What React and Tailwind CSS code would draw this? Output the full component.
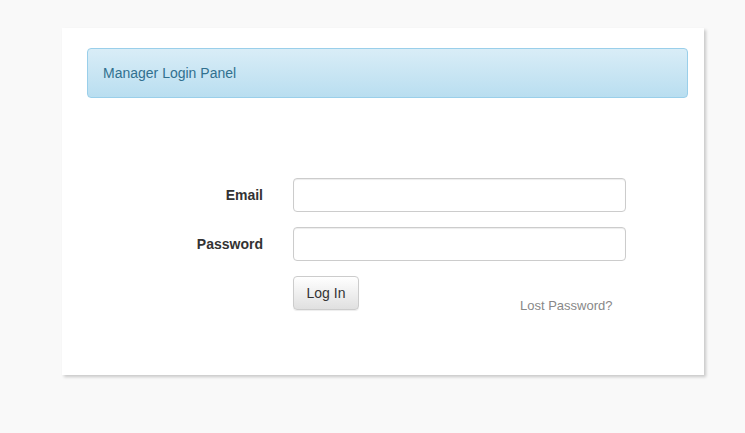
export default function App() {
  return (
    <div className="min-h-[433px] bg-[#f9f9f9] pt-[28px] font-['Liberation_Sans',Arial,sans-serif] text-[14px] text-[#333]">
      <div className="ml-[62px] w-[642px] bg-white pb-[65px] pl-[25px] pr-[16px] pt-[20px] shadow-[2px_2px_3px_rgba(0,0,0,0.2)]">
        <div className="flex h-[50px] items-center rounded-[4px] border border-[#9acfea] bg-gradient-to-b from-[#d9edf7] to-[#b9def0] pl-[15px] pt-[1px] text-[#31708f]">
          Manager Login Panel
        </div>

        <form className="mt-[80px] flex flex-col gap-[15px]">
          <div className="flex items-center">
            <label className="w-[176px] text-right font-bold">Email</label>
            <input
              type="email"
              className="ml-[30px] h-[34px] w-[333px] rounded-[4px] border border-[#ccc] px-3 shadow-[inset_0_1px_1px_rgba(0,0,0,0.075)] outline-none"
            />
          </div>
          <div className="flex items-center">
            <label className="w-[176px] text-right font-bold">Password</label>
            <input
              type="password"
              className="ml-[30px] h-[34px] w-[333px] rounded-[4px] border border-[#ccc] px-3 shadow-[inset_0_1px_1px_rgba(0,0,0,0.075)] outline-none"
            />
          </div>
          <div className="flex items-end">
            <div className="w-[206px]" />
            <button
              type="button"
              className="h-[34px] w-[66px] rounded-[4px] border border-[#ccc] bg-gradient-to-b from-white to-[#e0e0e0] text-[14px] text-[#333] shadow-[0_1px_1px_rgba(0,0,0,0.075)]"
            >
              Log In
            </button>
            <a className="mb-[-5px] ml-[161px] text-[13px] text-[#888]">Lost Password?</a>
          </div>
        </form>
      </div>
    </div>
  );
}
